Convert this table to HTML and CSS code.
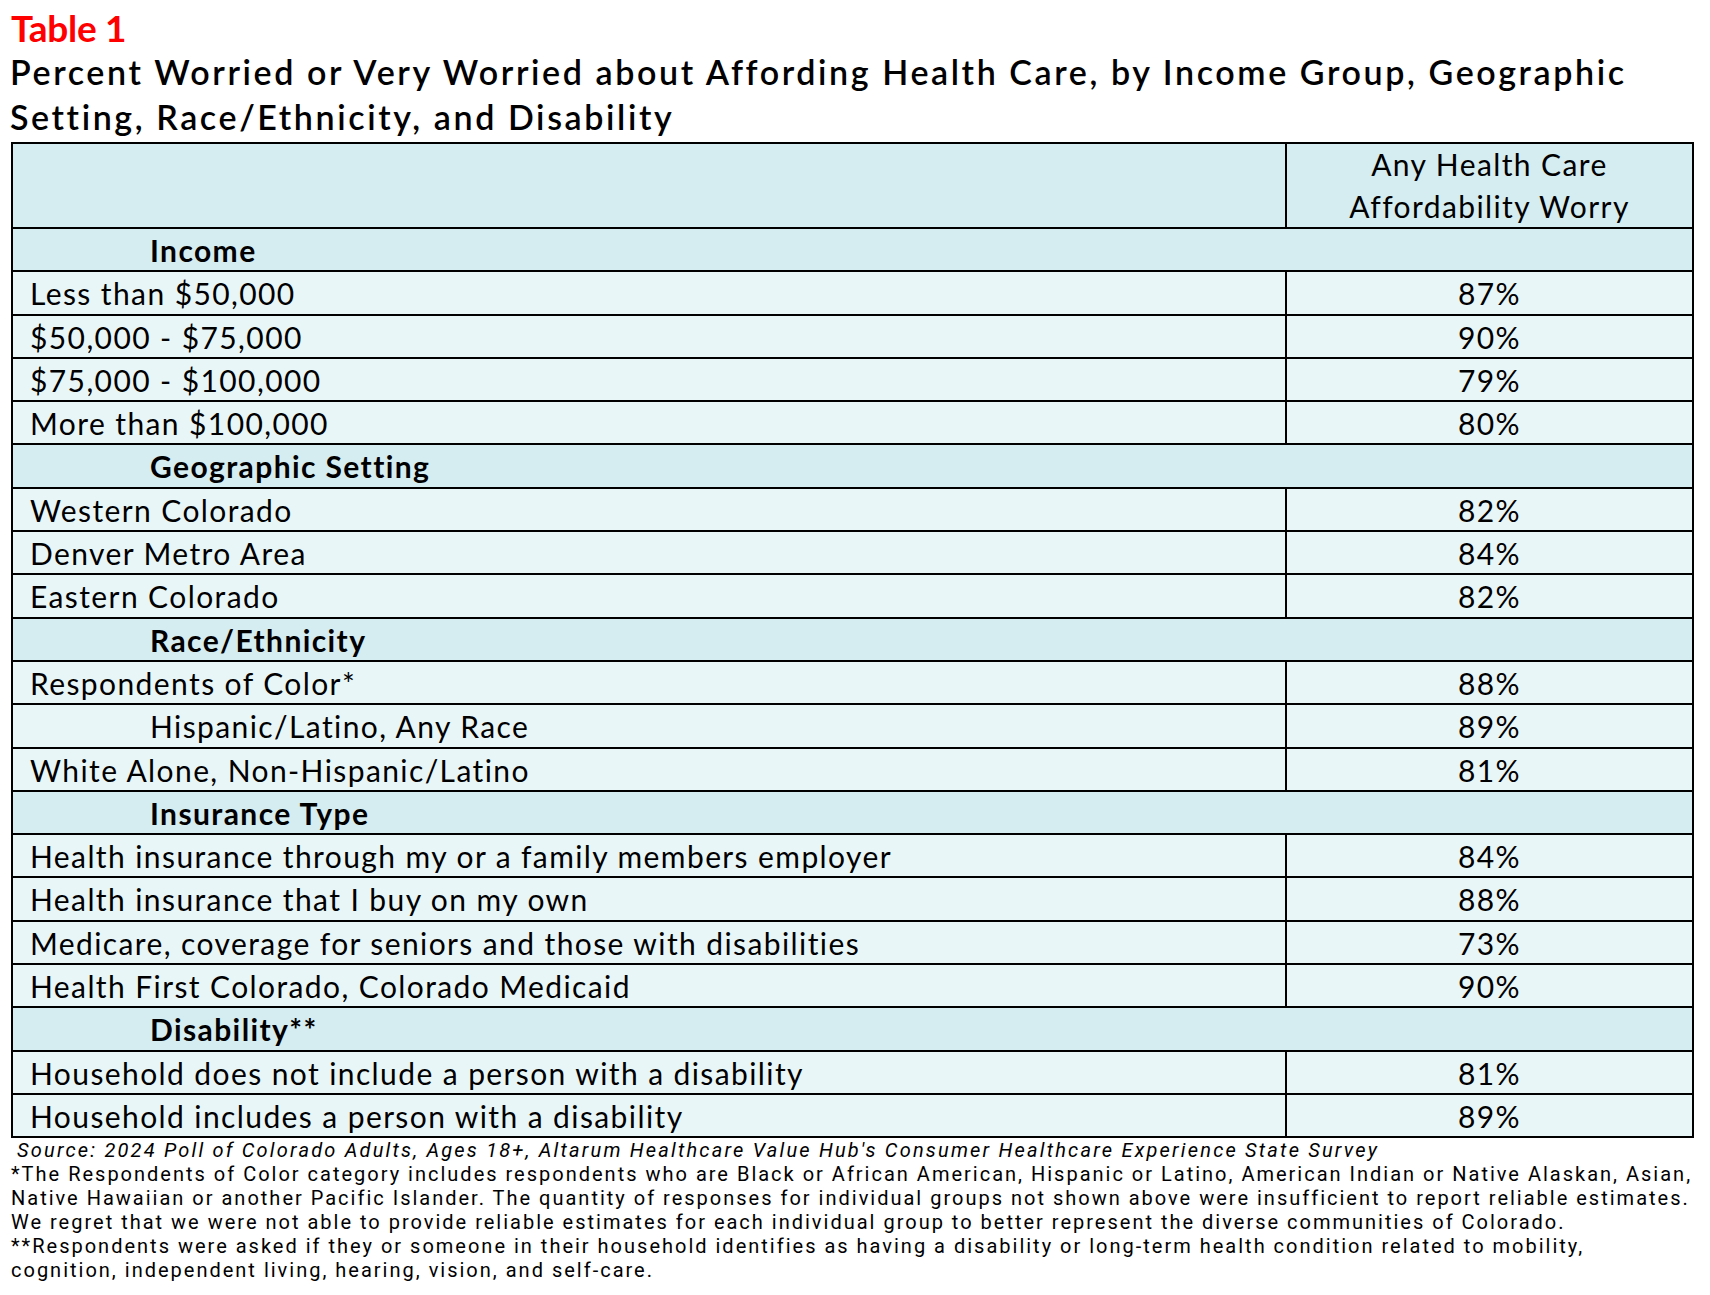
FILE: index.html
```html
<!DOCTYPE html>
<html lang="en">
  <head>
    <meta charset="UTF-8" />
    <title>Table 1</title>
    <link rel="stylesheet" href="styles.css">
  </head>
  <body>
    <div class="page">
      <div class="label">Table 1</div>
      <h1 class="title">Percent Worried or Very Worried about Affording Health Care, by Income Group, Geographic<br>Setting, Race/Ethnicity, and Disability</h1>

      <table class="data">
        <colgroup>
          <col class="col-name" />
          <col class="col-value" />
        </colgroup>
        <thead>
          <tr>
            <th></th>
            <th>Any Health Care<br>Affordability Worry</th>
          </tr>
        </thead>
        <tbody>
          <tr class="group"><td colspan="2">Income</td></tr>
          <tr><td>Less than $50,000</td><td class="num">87%</td></tr>
          <tr><td>$50,000 - $75,000</td><td class="num">90%</td></tr>
          <tr><td>$75,000 - $100,000</td><td class="num">79%</td></tr>
          <tr><td>More than $100,000</td><td class="num">80%</td></tr>

          <tr class="group"><td colspan="2">Geographic Setting</td></tr>
          <tr><td>Western Colorado</td><td class="num">82%</td></tr>
          <tr><td>Denver Metro Area</td><td class="num">84%</td></tr>
          <tr><td>Eastern Colorado</td><td class="num">82%</td></tr>

          <tr class="group"><td colspan="2">Race/Ethnicity</td></tr>
          <tr><td>Respondents of Color*</td><td class="num">88%</td></tr>
          <tr><td class="sub">Hispanic/Latino, Any Race</td><td class="num">89%</td></tr>
          <tr><td>White Alone, Non-Hispanic/Latino</td><td class="num">81%</td></tr>

          <tr class="group"><td colspan="2">Insurance Type</td></tr>
          <tr><td>Health insurance through my or a family members employer</td><td class="num">84%</td></tr>
          <tr><td>Health insurance that I buy on my own</td><td class="num">88%</td></tr>
          <tr><td>Medicare, coverage for seniors and those with disabilities</td><td class="num">73%</td></tr>
          <tr><td>Health First Colorado, Colorado Medicaid</td><td class="num">90%</td></tr>

          <tr class="group"><td colspan="2">Disability**</td></tr>
          <tr><td>Household does not include a person with a disability</td><td class="num">81%</td></tr>
          <tr><td>Household includes a person with a disability</td><td class="num">89%</td></tr>
        </tbody>
      </table>

      <div class="notes">
        <p class="source">Source: 2024 Poll of Colorado Adults, Ages 18+, Altarum Healthcare Value Hub's Consumer Healthcare Experience State Survey</p>
        <p>*The Respondents of Color category includes respondents who are Black or African American, Hispanic or Latino, American Indian or Native Alaskan, Asian,<br>Native Hawaiian or another Pacific Islander. The quantity of responses for individual groups not shown above were insufficient to report reliable estimates.<br>We regret that we were not able to provide reliable estimates for each individual group to better represent the diverse communities of Colorado.</p>
        <p>**Respondents were asked if they or someone in their household identifies as having a disability or long-term health condition related to mobility,<br>cognition, independent living, hearing, vision, and self-care.</p>
      </div>
    </div>
  </body>
</html>
```

FILE: styles.css
```css
body {
  margin: 0;
  background: #fff;
  color: #000;
  font-family: Lato, "Noto Sans", sans-serif;
}
.page {
  padding-left: 11px;
}
.label {
  color: #ff0000;
  font-size: 37px;
  line-height: 37px;
  font-weight: 700;
  letter-spacing: -0.3px;
  padding-top: 9px;
}
.title {
  margin: 3px 0 3px -1px;
  font-size: 34px;
  line-height: 45px;
  font-weight: 600;
  letter-spacing: 2.6px;
  white-space: nowrap;
}
.data {
  border-collapse: collapse;
  table-layout: fixed;
  width: 1681px;
}
.col-name {
  width: 1274px;
}
.col-value {
  width: 407px;
}
.data th,
.data td {
  border: 2px solid #000;
  font-size: 30px;
  letter-spacing: 1.4px;
  white-space: nowrap;
}
.data th {
  background: #d5ecf0;
  font-weight: 400;
  line-height: 41.5px;
  padding: 0;
  text-align: center;
}
.data td {
  background: #e9f6f8;
  line-height: 39.3px;
  padding: 2px 10px 0 17px;
}
.data td.num {
  text-align: center;
  padding: 2px 0 0;
}
.data td.sub {
  padding-left: 137px;
}
.group td {
  background: #d5ecf0;
  font-weight: 700;
  padding-left: 137px;
}
.notes {
  font-family: Roboto, "Liberation Sans", sans-serif;
  font-size: 20px;
  line-height: 24px;
  letter-spacing: 2px;
  white-space: nowrap;
}
.notes p {
  margin: 0;
}
.notes .source {
  font-style: italic;
  letter-spacing: 2.2px;
  padding-left: 6px;
}
```
